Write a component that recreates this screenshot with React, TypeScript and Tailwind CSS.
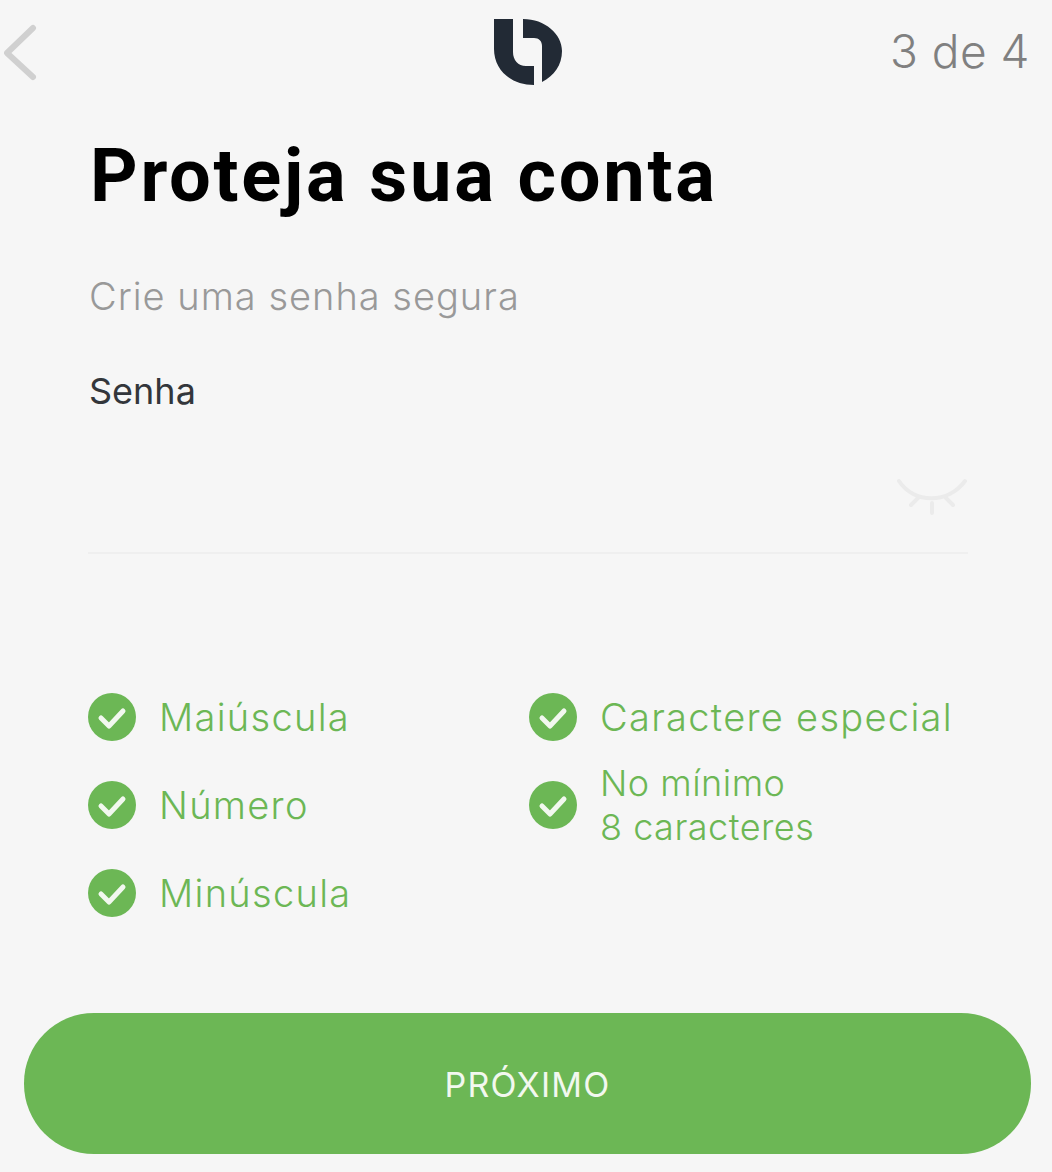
const leftChecks = ['Maiúscula', 'Número', 'Minúscula']

function CheckIcon() {
  return (
    <svg viewBox="0 0 48 48" className="h-12 w-12 shrink-0">
      <circle cx="24" cy="24" r="24" fill="#6cb755" />
      <path d="M13 25l8 8 14-15" fill="none" stroke="#f2f8ef" strokeWidth="5" strokeLinecap="round" strokeLinejoin="round" />
    </svg>
  )
}

function Logo() {
  return (
    <svg viewBox="0 0 70 70" className="h-[70px] w-[70px]">
      <path d="M1 3H20V36C20 44 25 50 33 50H41V69C18 69 1 54 1 33Z" fill="#222a35" />
      <path d="M30 3C52 3 69 18 69 35C69 49 61 60 49 66V30C49 25 46 22 41 22H30Z" fill="#222a35" />
    </svg>
  )
}

function CheckItem({ children }: { children: React.ReactNode }) {
  return (
    <div className="flex h-12 items-center gap-[23px] text-[38px] font-light tracking-[1.3px] text-[#6cb755]">
      <CheckIcon />
      <span>{children}</span>
    </div>
  )
}

export default function App() {
  return (
    <div className="flex h-[1172px] w-[1052px] flex-col overflow-hidden bg-[#f6f6f6] font-['Inter',sans-serif]">
      <div className="grid h-[86px] grid-cols-3 items-center pl-1 pr-6 pt-4">
        <svg viewBox="0 0 36 60" className="h-[60px] w-9">
          <path d="M29 7L3 32l26 24" fill="none" stroke="#d0d0d0" strokeWidth="6" strokeLinecap="round" strokeLinejoin="round" />
        </svg>
        <div className="ml-6 justify-self-center"><Logo /></div>
        <span className="-mr-0.5 justify-self-end text-[46px] font-light leading-[52px] tracking-[0.5px] text-[#808080]">3 de 4</span>
      </div>

      <div className="px-[90px]">
        <h1 className="mt-[45px] font-['Roboto',sans-serif] text-[74px] font-bold leading-[90px] tracking-[2.7px] text-black">Proteja sua conta</h1>
        <p className="-ml-px mt-[52px] text-[38px] font-light leading-[46px] tracking-[1px] text-[#999999]">Crie uma senha segura</p>
        <p className="-ml-px mt-[50px] text-[36px] leading-[44px] text-[#33363b]">Senha</p>

        <div className="-ml-0.5 -mr-[6px] mt-[47px] flex h-[94px] items-start justify-end border-b-2 border-[#efefef]">
          <svg viewBox="0 0 72 44" className="mt-[17px] h-11 w-[72px]">
            <path d="M3 4C18 27 52 27 69 4M15 28l7-7M57 28l-7-7M36 36V26" fill="none" stroke="#ebebeb" strokeWidth="4" strokeLinecap="round" />
          </svg>
        </div>
      </div>

      <div className="ml-[88px] mt-[139px] flex">
        <div className="flex w-[441px] flex-col gap-10">
          {leftChecks.map((label) => (
            <CheckItem key={label}>{label}</CheckItem>
          ))}
        </div>
        <div className="flex flex-col gap-10">
          <CheckItem>Caractere especial</CheckItem>
          <CheckItem>
            <span className="block text-[36px] leading-[44px] tracking-[0.5px]">No mínimo<br />8 caracteres</span>
          </CheckItem>
        </div>
      </div>

      <div className="ml-6 mr-[21px] mt-[96px]">
        <button className="flex h-[141px] w-full items-center justify-center rounded-[70px] bg-[#6cb755] pt-0.5 text-[34px] tracking-[1.2px] text-[#f2f8ef]">
          PRÓXIMO
        </button>
      </div>
    </div>
  )
}
